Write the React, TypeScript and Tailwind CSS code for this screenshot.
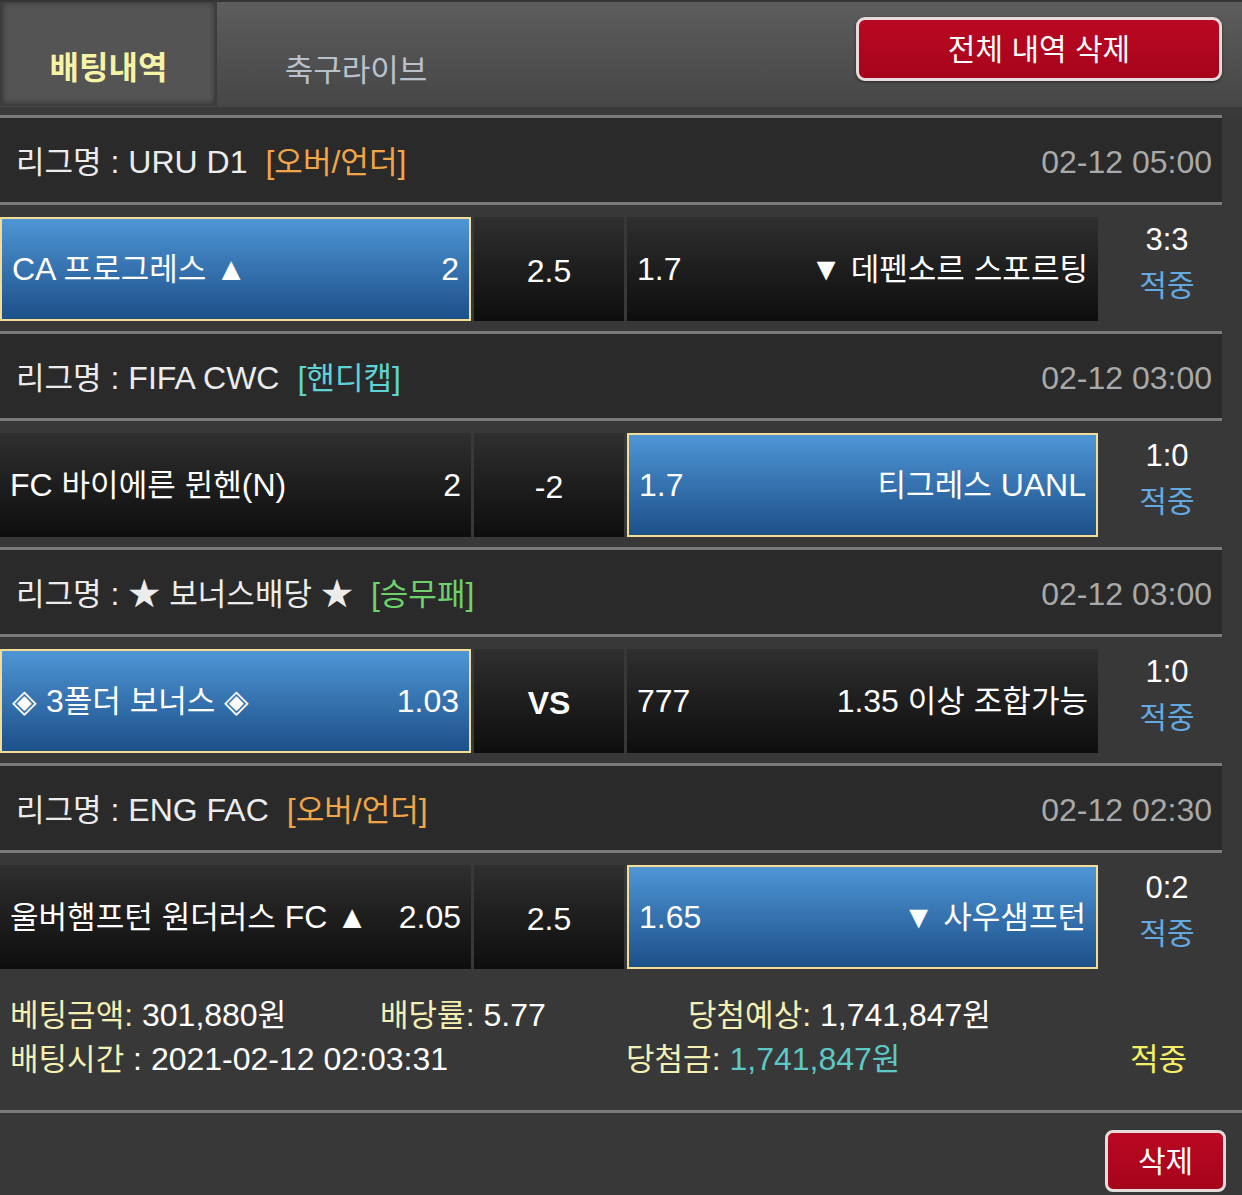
import React from "react";

// Korean runs are drawn a bit smaller so that they keep the narrow look of the reference
function K({ t }: { t: string }) {
  const parts = t.split(/([가-힣]+)/);
  return (
    <>
      {parts.map((s, i) =>
        /[가-힣]/.test(s) ? (
          <span key={i} className="text-[0.97em]">
            {s}
          </span>
        ) : (
          <React.Fragment key={i}>{s}</React.Fragment>
        )
      )}
    </>
  );
}

type Match = {
  league: string;
  tag: string;
  tagColor: string;
  date: string;
  home: string;
  homeOdd: string;
  mid: string;
  away: string;
  awayOdd: string;
  pick: "home" | "away";
  score: string;
};

const matches: Match[] = [
  {
    league: "URU D1",
    tag: "[오버/언더]",
    tagColor: "text-[#f1a548]",
    date: "02-12 05:00",
    home: "CA 프로그레스 ▲",
    homeOdd: "2",
    mid: "2.5",
    away: "▼ 데펜소르 스포르팅",
    awayOdd: "1.7",
    pick: "home",
    score: "3:3",
  },
  {
    league: "FIFA CWC",
    tag: "[핸디캡]",
    tagColor: "text-[#5ed2d4]",
    date: "02-12 03:00",
    home: "FC 바이에른 뮌헨(N)",
    homeOdd: "2",
    mid: "-2",
    away: "티그레스 UANL",
    awayOdd: "1.7",
    pick: "away",
    score: "1:0",
  },
  {
    league: "★ 보너스배당 ★",
    tag: "[승무패]",
    tagColor: "text-[#6dd26a]",
    date: "02-12 03:00",
    home: "◈ 3폴더 보너스 ◈",
    homeOdd: "1.03",
    mid: "VS",
    away: "1.35 이상 조합가능",
    awayOdd: "777",
    pick: "home",
    score: "1:0",
  },
  {
    league: "ENG FAC",
    tag: "[오버/언더]",
    tagColor: "text-[#f1a548]",
    date: "02-12 02:30",
    home: "울버햄프턴 원더러스 FC ▲",
    homeOdd: "2.05",
    mid: "2.5",
    away: "▼ 사우샘프턴",
    awayOdd: "1.65",
    pick: "away",
    score: "0:2",
  },
];

const blueCell =
  "border-2 border-[#f3dc96] bg-gradient-to-b from-[#4e96d6] to-[#1d5089] px-[10px]";
const darkCell = "bg-gradient-to-b from-[#2f2f2f] to-[#0e0e0e] px-[10px]";

function Line() {
  return <div className="h-[3px] w-[1222px] bg-[#7a7a7a]" />;
}

function MatchBlock({ m, last }: { m: Match; last: boolean }) {
  return (
    <div>
      <Line />
      <div className="flex h-[84px] w-[1222px] items-center justify-between bg-[#2a2a2a] pl-[16px] pr-[10px] pt-[4px]">
        <div className="flex items-center text-[#ececec]">
          <span>
            <K t={`리그명 : ${m.league}`} />
          </span>
          <span className={`ml-[18px] ${m.tagColor}`}>
            <K t={m.tag} />
          </span>
        </div>
        <span className="text-[#a9a9a9]">{m.date}</span>
      </div>
      <Line />
      <div className={`flex pt-[12px] ${last ? "h-[117px]" : "h-[126px]"}`}>
        <div
          className={`flex h-[104px] w-[471px] items-center justify-between text-white ${
            m.pick === "home" ? blueCell : darkCell
          }`}
        >
          <span>
            <K t={m.home} />
          </span>
          <span>{m.homeOdd}</span>
        </div>
        <div
          className={`ml-[3px] flex h-[104px] w-[150px] items-center justify-center pt-[4px] text-white ${darkCell} ${
            m.mid === "VS" ? "font-bold" : ""
          }`}
        >
          {m.mid}
        </div>
        <div
          className={`ml-[3px] flex h-[104px] w-[471px] items-center justify-between text-white ${
            m.pick === "away" ? blueCell : darkCell
          }`}
        >
          <span>{m.awayOdd}</span>
          <span>
            <K t={m.away} />
          </span>
        </div>
        <div className="flex w-[138px] flex-col items-center text-[31px] leading-[46px]">
          <span className="text-white">{m.score}</span>
          <span className="text-[#63a9e0]">
            <K t="적중" />
          </span>
        </div>
      </div>
    </div>
  );
}

export default function App() {
  return (
    <div className="min-h-[1195px] w-[1242px] bg-[#383838] font-['Liberation_Sans','Noto_Sans_CJK_KR',sans-serif] text-[32px] leading-none">
      {/* tabs */}
      <div className="flex h-[107px] border-t-2 border-[#353535] bg-gradient-to-b from-[#5d5d5d] to-[#464646]">
        <div className="flex h-[104px] w-[217px] items-center justify-center border-x-2 border-b-2 border-[#3c3c3c] bg-[#545454] pt-[30px] text-[32px] font-bold text-[#f6f3a6] shadow-[inset_0_0_6px_rgba(0,0,0,0.45)]">
          배팅내역
        </div>
        <div className="flex w-[278px] items-center justify-center pt-[32px] text-[31px] text-[#b9c1cd]">
          축구라이브
        </div>
        <div className="flex flex-1 justify-end pr-[20px] pt-[15px]">
          <button className="flex h-[64px] w-[366px] items-center justify-center rounded-[9px] border-[3px] border-[#e7dcdc] bg-gradient-to-b from-[#ba0822] to-[#a6041b] pt-[2px] text-[30px] text-white shadow-[0_1px_3px_rgba(0,0,0,0.5)]">
            전체 내역 삭제
          </button>
        </div>
      </div>
      <div className="h-[8px] bg-[#3a3a3a]" />

      {matches.map((m, i) => (
        <MatchBlock key={i} m={m} last={i === matches.length - 1} />
      ))}

      {/* summary */}
      <div className="h-[140px] pl-[10px] pt-[23px]">
        <div className="flex h-[44px] items-center">
          <span className="w-[370px]">
            <span className="text-[#f4efb3]">
              <K t="베팅금액:" />
            </span>
            <span className="text-white">
              {" "}
              <K t="301,880원" />
            </span>
          </span>
          <span className="w-[308px]">
            <span className="text-[#f4efb3]">
              <K t="배당률:" />
            </span>
            <span className="text-white"> 5.77</span>
          </span>
          <span>
            <span className="text-[#f4efb3]">
              <K t="당첨예상:" />
            </span>
            <span className="text-white">
              {" "}
              <K t="1,741,847원" />
            </span>
          </span>
        </div>
        <div className="flex h-[44px] items-center">
          <span className="w-[616px]">
            <span className="text-[#f4efb3]">
              <K t="배팅시간" />
            </span>
            <span className="text-white"> : 2021-02-12 02:03:31</span>
          </span>
          <span className="w-[504px]">
            <span className="text-[#f4efb3]">
              <K t="당첨금:" />
            </span>
            <span className="text-[#5cc9c6]">
              {" "}
              <K t="1,741,847원" />
            </span>
          </span>
          <span className="text-[#f3ee64]">
            <K t="적중" />
          </span>
        </div>
      </div>
      <div className="h-[3px] w-full bg-[#7a7a7a]" />
      <div className="flex h-[82px] justify-end pr-[16px] pt-[17px]">
        <button className="flex h-[62px] w-[121px] items-center justify-center rounded-[8px] border-[3px] border-[#e7dcdc] bg-gradient-to-b from-[#ba0822] to-[#a6041b] pt-[2px] text-[30px] text-white">
          삭제
        </button>
      </div>
    </div>
  );
}
